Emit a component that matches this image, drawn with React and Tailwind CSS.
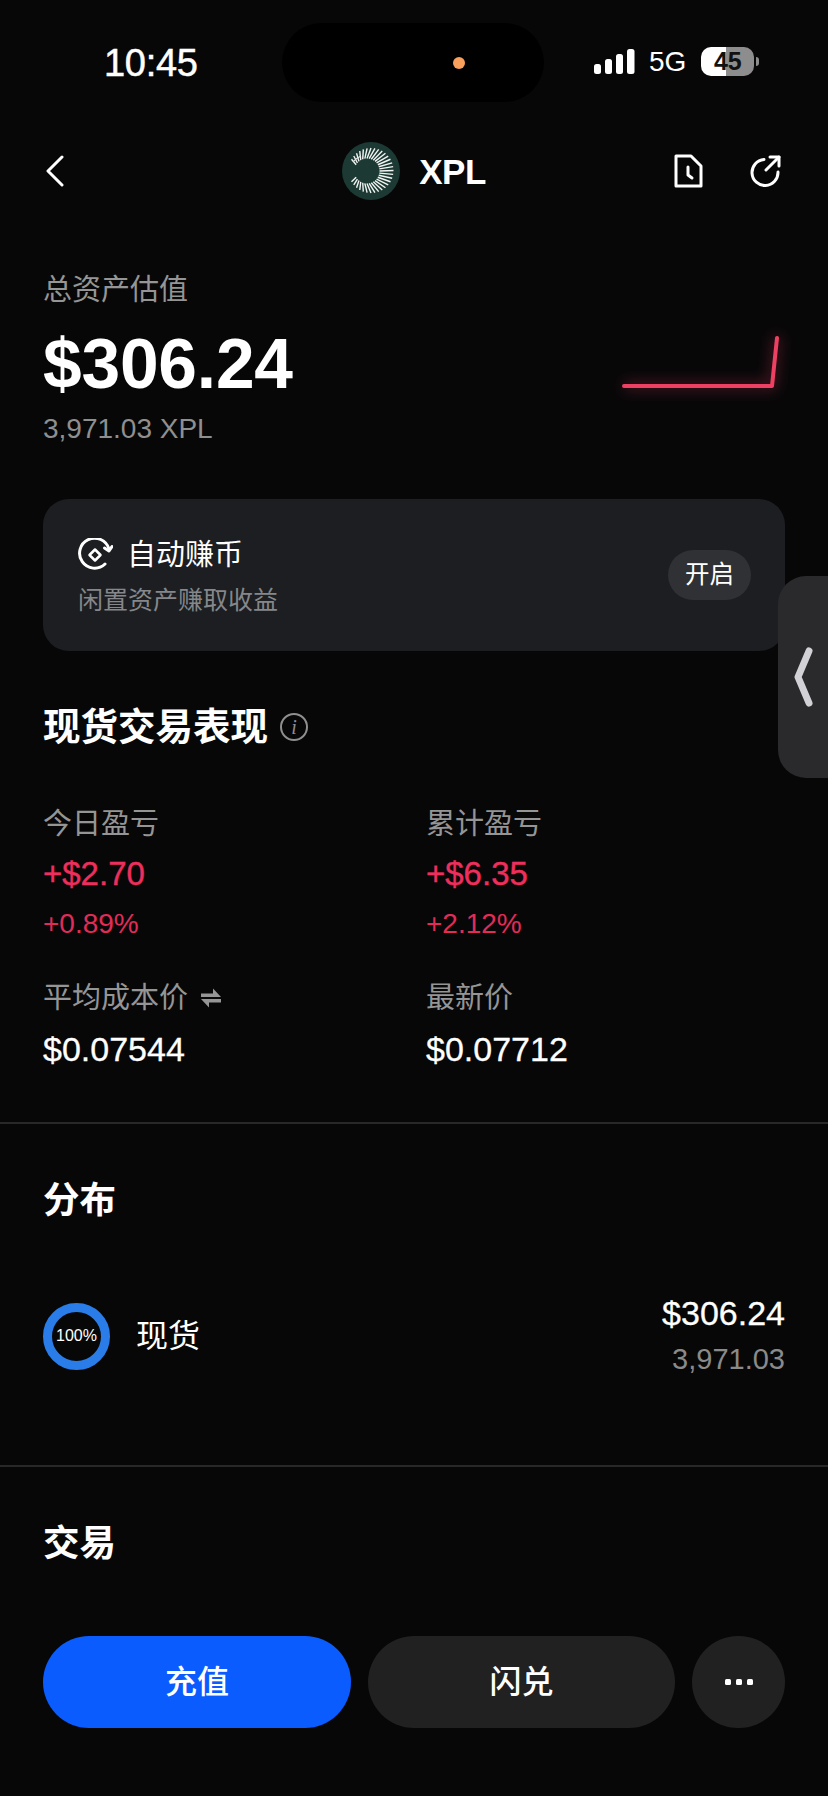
import React from 'react';

const rays = Array.from({ length: 31 }, (_, i) => {
  const a = ((-150 + i * 10) * Math.PI) / 180;
  return {
    x1: 25 + Math.cos(a) * 12.5,
    y1: 29 + Math.sin(a) * 12.5,
    x2: 29 + Math.cos(a) * 22.5,
    y2: 28.5 + Math.sin(a) * 22.5,
  };
});

const Logo = () => (
  <svg width="58" height="58" viewBox="0 0 58 58" className="shrink-0">
    <circle cx="29" cy="29" r="29" fill="#1c3a33" />
    {rays.map((r, i) => (
      <line key={i} x1={r.x1} y1={r.y1} x2={r.x2} y2={r.y2} stroke="#f2f5f3" strokeWidth="1.4" />
    ))}
    <path d="M11 20 A 20 20 0 0 1 19 14" fill="none" stroke="#dfe6e2" strokeWidth="1.2" />
  </svg>
);

const Stat = ({ label, value, pct, icon }) => (
  <div className="flex flex-col">
    <div className="flex items-center gap-[13px] text-[29px] leading-[36px] text-[#959595]">
      {label}
      {icon}
    </div>
    <div
      className={
        pct
          ? 'mt-[14px] text-[33px] leading-[36px] text-[#ee2f5d] [-webkit-text-stroke:0.4px_#ee2f5d]'
          : 'mt-[15px] text-[34px] leading-[36px] text-white [-webkit-text-stroke:0.3px_#ffffff]'
      }
    >
      {value}
    </div>
    {pct && <div className="mt-[14px] text-[28px] leading-[36px] text-[#e22c58]">{pct}</div>}
  </div>
);

const SwapIcon = () => (
  <svg width="20" height="20" viewBox="0 0 20 20" fill="#959595">
    <path d="M0 5.500h12V0.500L20 9H0z" />
    <path d="M20 14.500H8v5L0 11h20z" />
  </svg>
);

export default function App() {
  return (
    <div className="relative w-[828px] h-[1796px] overflow-hidden bg-[#070708] text-white font-['Liberation_Sans','Noto_Sans_CJK_SC',sans-serif]">
      {/* status bar */}
      <div className="flex items-center h-[79px] mt-[23px]">
        <div className="w-[282px] pl-[104px] text-[38px] leading-none tracking-[-0.3px] [-webkit-text-stroke:0.5px_#ffffff]">10:45</div>
        <div className="flex items-center w-[262px] h-[79px] rounded-[40px] bg-black pl-[171px]">
          <div className="w-[12px] h-[12px] rounded-full bg-[#f9a05c]" />
        </div>
        <div className="flex items-center pl-[50px] -mt-[2px]">
          <svg width="41" height="25" viewBox="0 0 41 25" fill="#fff">
            <rect x="0" y="15" width="7" height="10" rx="2.500" />
            <rect x="11" y="10" width="7" height="15" rx="2.500" />
            <rect x="22" y="5" width="7" height="20" rx="2.500" />
            <rect x="33" y="0" width="7.500" height="25" rx="2.500" />
          </svg>
          <div className="ml-[14px] text-[28px] leading-none">5G</div>
          <div className="ml-[15px] flex items-center justify-center w-[53px] h-[29px] rounded-[10px] bg-[linear-gradient(90deg,#ffffff_47%,#8d8d8d_47%)] text-[#111] text-[25px] font-bold leading-none">
            45
          </div>
          <div className="ml-[2px] w-[3px] h-[9px] rounded-r-full bg-[#8d8d8d]" />
        </div>
      </div>

      {/* nav */}
      <div className="flex items-center justify-between h-[58px] mt-[40px] px-[43px]">
        <div className="w-[120px] pl-[3px]">
          <svg width="18" height="32" viewBox="0 0 18 32" fill="none" stroke="#fff" strokeWidth="3" strokeLinecap="round" strokeLinejoin="round">
            <path d="M16 2 2 16l14 14" />
          </svg>
        </div>
        <div className="flex items-center gap-[19px]">
          <Logo />
          <span className="text-[35px] font-bold tracking-[-0.5px] leading-none">XPL</span>
        </div>
        <div className="flex items-center justify-end gap-[46px] w-[120px] pr-[4px]">
          <svg width="29" height="34" viewBox="0 0 29 34" fill="none" stroke="#fff" strokeWidth="3" strokeLinejoin="round" strokeLinecap="round">
            <path d="M2 2h15l10 10v20H2z" />
            <path d="M14 13v8l4 3" />
          </svg>
          <svg width="32" height="32" viewBox="0 0 32 32" fill="none" stroke="#fff" strokeWidth="3" strokeLinecap="round" strokeLinejoin="round">
            <path d="M15 4.500A13 13 0 1 0 29 17" />
            <path d="M21 2h9v9" />
            <path d="M30 2 17 15" />
          </svg>
        </div>
      </div>

      {/* total */}
      <div className="flex justify-between mt-[70px] pl-[43px]">
        <div className="flex flex-col">
          <div className="text-[29px] leading-[40px] text-[#959595]">总资产估值</div>
          <div className="mt-[14px] text-[69.500px] font-bold leading-[80px] tracking-[-0.2px]">$306.24</div>
          <div className="mt-[7px] text-[28px] leading-[36px] text-[#8f8f8f]">3,971.03 XPL</div>
        </div>
        <svg width="200" height="90" viewBox="0 0 200 90" fill="none" className="mt-[50px] mr-[30px] self-start">
          <defs>
            <filter id="glow" x="-20%" y="-50%" width="140%" height="200%">
              <feGaussianBlur stdDeviation="7" />
            </filter>
          </defs>
          <path d="M26 66h148l5-50" stroke="#ef3f63" strokeWidth="8" opacity="0.3" filter="url(#glow)" />
          <path d="M26 66h148l5-48" stroke="#ee4062" strokeWidth="4" strokeLinecap="round" strokeLinejoin="round" />
        </svg>
      </div>

      {/* auto earn card */}
      <div className="flex items-center justify-between h-[152px] mx-[43px] mt-[52px] pl-[35px] pr-[34px] rounded-[26px] bg-[#1c1e21]">
        <div className="flex flex-col pt-[5px]">
          <div className="flex items-center gap-[14px]">
            <svg width="35" height="34" viewBox="0 0 35 34" fill="none" stroke="#fff" strokeWidth="3" strokeLinecap="round" strokeLinejoin="round">
              <path d="M27 26A15 15 0 1 1 31 11" />
              <path d="M34 8.500 31 13l-4.500-3" />
              <path d="M17 11.500l5.500 5.500-5.500 5.500-5.500-5.500z" strokeWidth="2.500" />
            </svg>
            <span className="text-[29px] leading-[36px]">自动赚币</span>
          </div>
          <div className="mt-[9px] text-[25px] leading-[36px] text-[#85878a]">闲置资产赚取收益</div>
        </div>
        <div className="flex items-center justify-center w-[83px] h-[50px] rounded-[25px] bg-[#303135] text-[24.500px] leading-none text-white">开启</div>
      </div>

      {/* spot performance */}
      <div className="flex items-center gap-[12px] mt-[54px] pl-[43px] h-[44px]">
        <span className="text-[37.500px] leading-[44px] font-bold">现货交易表现</span>
        <div className="flex items-center justify-center w-[28px] h-[28px] rounded-full border-2 border-[#8f8f8f] text-[20px] italic leading-none text-[#8f8f8f] font-['Liberation_Serif',serif]">i</div>
      </div>
      <div className="grid grid-cols-[383px_1fr] gap-y-[38px] mt-[57px] pl-[43px]">
        <Stat label="今日盈亏" value="+$2.70" pct="+0.89%" />
        <Stat label="累计盈亏" value="+$6.35" pct="+2.12%" />
        <Stat label="平均成本价" value="$0.07544" icon={<SwapIcon />} />
        <Stat label="最新价" value="$0.07712" />
      </div>
      <div className="h-[2px] mt-[55px] bg-[#26282a]" />

      {/* distribution */}
      <div className="mt-[55px] pl-[43px] text-[36.500px] leading-[44px] font-bold">分布</div>
      <div className="flex items-center justify-between h-[68px] mt-[79px] px-[43px]">
        <div className="flex items-center gap-[26px]">
          <div className="flex items-center justify-center w-[67px] h-[67px] rounded-full border-[9px] border-[#2a7de8] text-[16px] leading-none">100%</div>
          <span className="text-[32px] leading-none">现货</span>
        </div>
        <div className="flex flex-col items-end">
          <span className="text-[34px] leading-[36px] [-webkit-text-stroke:0.3px_#ffffff]">$306.24</span>
          <span className="mt-[10px] text-[29px] leading-[36px] text-[#8a8a8a]">3,971.03</span>
        </div>
      </div>
      <div className="h-[2px] mt-[95px] bg-[#26282a]" />

      {/* trade */}
      <div className="mt-[55px] pl-[43px] text-[36.500px] leading-[44px] font-bold">交易</div>
      <div className="flex gap-[17px] mt-[70px] px-[43px]">
        <button className="w-[308px] h-[92px] rounded-[46px] bg-[#0a5cff] text-[32px] font-medium">充值</button>
        <button className="w-[307px] h-[92px] rounded-[46px] bg-[#212121] text-[32px] font-medium">闪兑</button>
        <button className="flex items-center justify-center gap-[5px] w-[93px] h-[92px] rounded-full bg-[#212121]">
          <span className="w-[6px] h-[6px] rounded-[1.500px] bg-white" />
          <span className="w-[6px] h-[6px] rounded-[1.500px] bg-white" />
          <span className="w-[6px] h-[6px] rounded-[1.500px] bg-white" />
        </button>
      </div>

      {/* floating side handle */}
      <div className="absolute top-[576px] left-[778px] flex items-center w-[50px] h-[202px] pl-[15px] rounded-l-[28px] bg-[#2a2a2c]">
        <svg width="20" height="60" viewBox="0 0 20 60" fill="none" stroke="#d2d2d6" strokeWidth="7" strokeLinecap="round" strokeLinejoin="round">
          <path d="M16 4 5 30l11 26" />
        </svg>
      </div>
    </div>
  );
}
